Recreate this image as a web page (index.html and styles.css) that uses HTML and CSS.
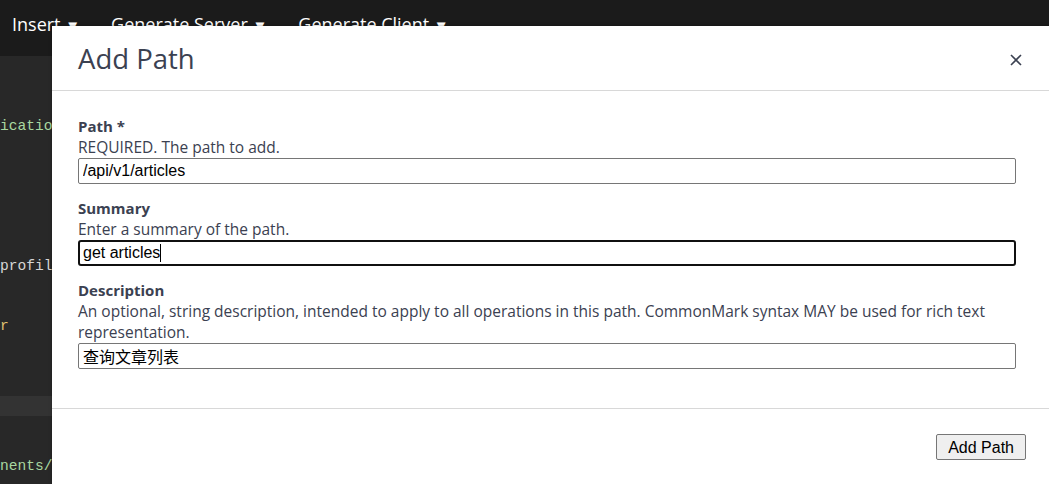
FILE: index.html
```html
<!DOCTYPE html>
<html lang="en">
<head>
<meta charset="utf-8">
<title>Add Path</title>
<link rel="stylesheet" href="styles.css">
</head>
<body>
<div class="page">
  <nav class="topbar">
    <span class="menu">Insert <span class="caret">▼</span></span>
    <span class="menu">Generate Server <span class="caret">▼</span></span>
    <span class="menu">Generate Client <span class="caret">▼</span></span>
  </nav>
  <div class="editor">
    <div class="line"></div>
    <div class="line"></div>
    <div class="line"></div>
    <div class="line"><span class="str">icatio</span></div>
    <div class="line"></div>
    <div class="line"></div>
    <div class="line"></div>
    <div class="line"></div>
    <div class="line"></div>
    <div class="line"></div>
    <div class="line"><span class="plain">profil</span></div>
    <div class="line"></div>
    <div class="line"></div>
    <div class="line"><span class="key">r</span></div>
    <div class="line"></div>
    <div class="line"></div>
    <div class="line"></div>
    <div class="line active"></div>
    <div class="line"></div>
    <div class="line"></div>
    <div class="line"><span class="str">nents/</span></div>
  </div>
</div>

<div class="modal">
  <div class="modal-header">
    <h2 class="modal-title">Add Path</h2>
    <button class="close" aria-label="Close">
      <svg width="12" height="12" viewBox="0 0 12 12"><path d="M1 1 L11 11 M11 1 L1 11" stroke="#3b4151" stroke-width="1.6" fill="none"/></svg>
    </button>
  </div>
  <div class="modal-body">
    <div class="field">
      <div class="label">Path *</div>
      <div class="desc">REQUIRED. The path to add.</div>
      <input class="input" type="text" value="/api/v1/articles">
    </div>
    <div class="field">
      <div class="label">Summary</div>
      <div class="desc">Enter a summary of the path.</div>
      <div class="input focused"><span>get articles</span><span class="text-caret"></span></div>
    </div>
    <div class="field">
      <div class="label">Description</div>
      <div class="desc">An optional, string description, intended to apply to all operations in this path. CommonMark syntax MAY be used for rich text representation.</div>
      <input class="input cjk" type="text" value="查询文章列表">
    </div>
  </div>
  <div class="modal-footer">
    <button class="btn">Add Path</button>
  </div>
</div>
</body>
</html>
```
FILE: styles.css
```css
html, body {
  margin: 0;
  padding: 0;
  height: 100%;
  overflow: hidden;
}
body {
  background: #282828;
  font-family: "Open Sans", sans-serif;
}
.page {
  display: flex;
  flex-direction: column;
  height: 100%;
}
.topbar {
  height: 56px;
  background: #1b1b1b;
  display: flex;
  align-items: flex-start;
  gap: 31px;
  padding: 0 0 0 12px;
  color: #ffffff;
  font-size: 18px;
  line-height: 48px;
  flex: none;
}
.caret {
  font-size: 15px;
  vertical-align: 0;
}
.editor {
  flex: 1;
  background: #282828;
  font-family: "Liberation Mono", monospace;
  font-size: 14.6px;
}
.line {
  height: 20px;
  line-height: 20px;
  white-space: pre;
}
.line.active {
  background: #333333;
}
.str { color: #a8d8a0; }
.plain { color: #d6d6d6; }
.key { color: #e0c070; }

.modal {
  position: absolute;
  left: 52px;
  top: 26px;
  width: 1000px;
  background: #ffffff;
  box-shadow: 0 0 3px rgba(0,0,0,0.35);
  color: #3b4151;
}
.modal-header {
  height: 64px;
  display: flex;
  align-items: center;
  justify-content: space-between;
  padding: 0 30px 0 26px;
  border-bottom: 1px solid #d8d8d8;
}
.modal-title {
  margin: 0;
  font-weight: 400;
  font-size: 27.5px;
  line-height: 1;
  color: #3b4151;
  padding-top: 2px;
}
.close {
  border: 0;
  background: none;
  padding: 0;
  margin: 4px 0 0 0;
  width: 12px;
  height: 12px;
  display: flex;
}
.modal-body {
  padding: 25px 36px 25px 26px;
  border-bottom: 1px solid #d8d8d8;
}
.field {
  display: flex;
  flex-direction: column;
  margin-bottom: 14px;
}
.label {
  font-weight: 700;
  font-size: 15px;
  line-height: 21px;
}
.desc {
  font-size: 15.5px;
  line-height: 21px;
}
.input {
  box-sizing: border-box;
  height: 26px;
  width: 100%;
  border: 1px solid #767676;
  border-radius: 2px;
  padding: 0 4px;
  margin: 0;
  font-family: "Liberation Sans", Arial, sans-serif;
  font-size: 16px;
  color: #000000;
  background: #ffffff;
}
.input.cjk {
  font-family: "Liberation Sans", "Noto Sans CJK SC", sans-serif;
}
.input.focused {
  border: 2px solid #101010;
  border-radius: 3px;
  padding: 0 3px;
  display: flex;
  align-items: center;
}
.text-caret {
  display: inline-block;
  width: 1px;
  height: 18px;
  background: #000;
}
.modal-footer {
  display: flex;
  justify-content: flex-end;
  padding: 25px 26px 30px 26px;
}
.btn {
  font-family: "Liberation Sans", Arial, sans-serif;
  font-size: 16px;
  color: #000;
  background: #efefef;
  border: 1px solid #767676;
  border-radius: 2px;
  padding: 3px 11px 2px;
  line-height: 19px;
}
```
